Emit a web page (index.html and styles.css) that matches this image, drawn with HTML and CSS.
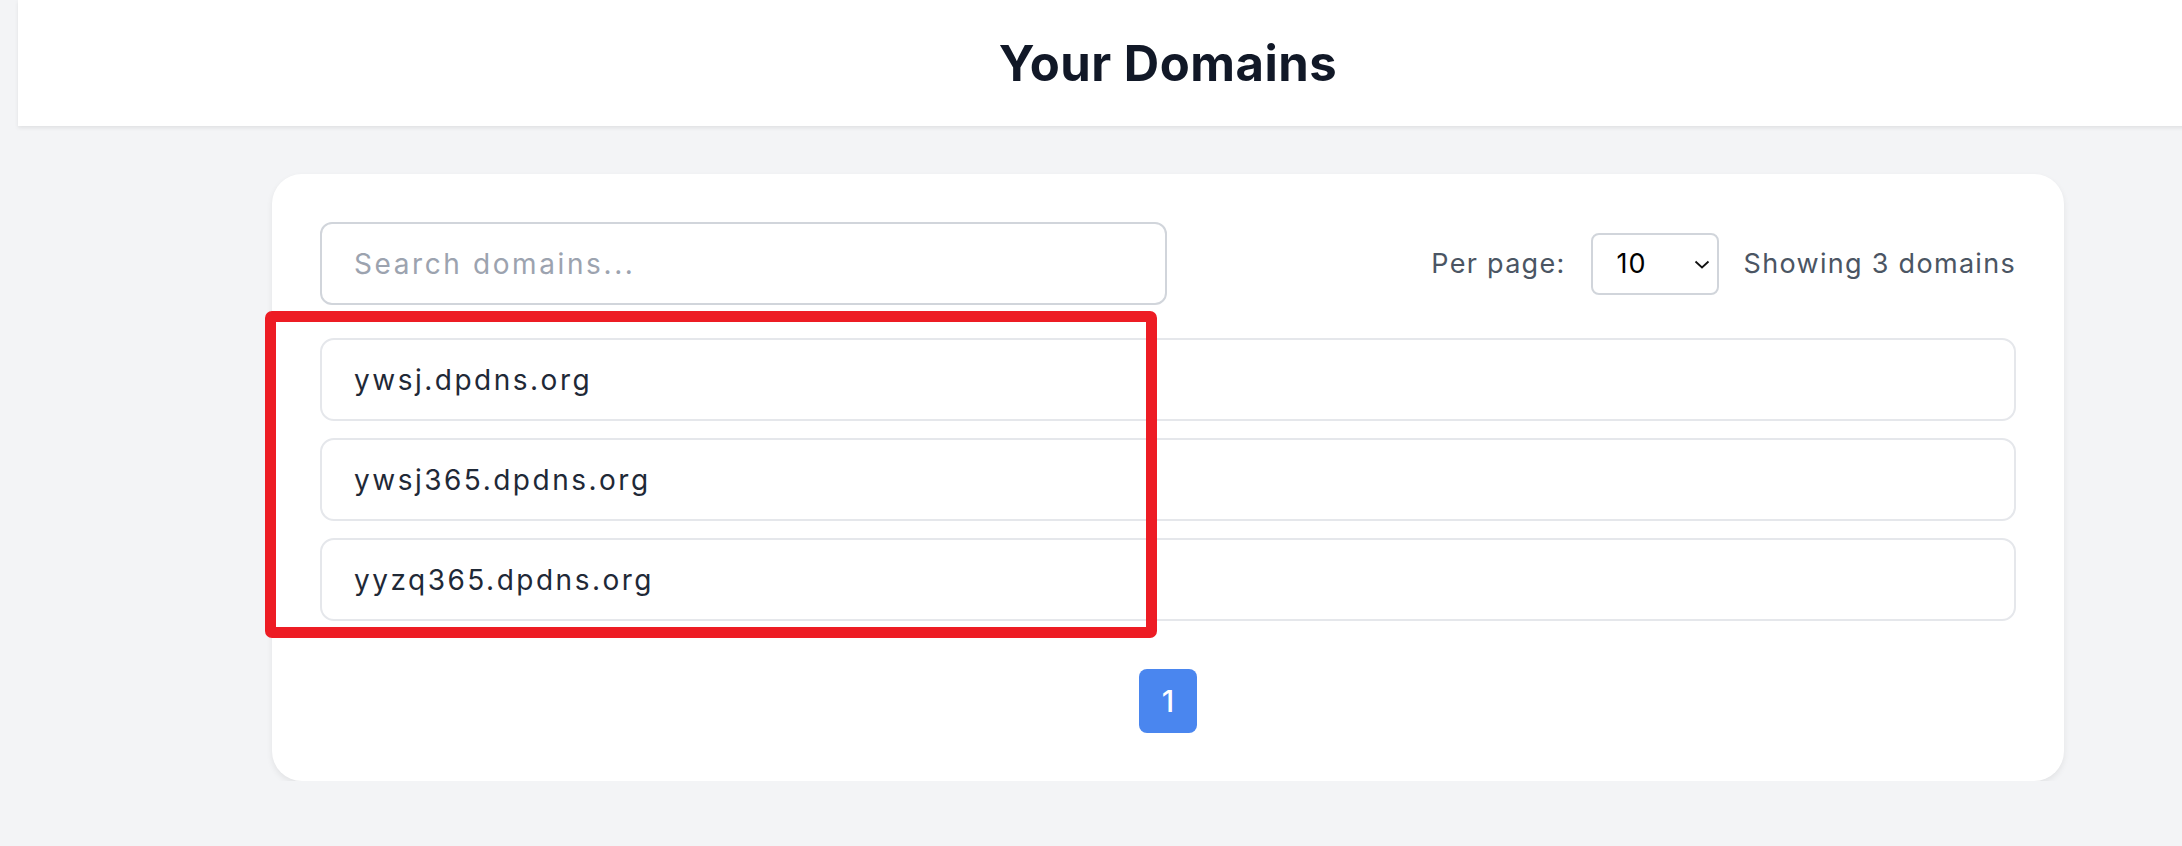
FILE: index.html
```html
<!DOCTYPE html>
<html lang="en">
<head>
  <meta charset="UTF-8">
  <meta name="viewport" content="width=device-width, initial-scale=1.0">
  <title>Your Domains</title>
  <link rel="stylesheet" href="styles.css">
</head>
<body>
  <div class="page">
    <header class="topbar">
      <h1>Your Domains</h1>
    </header>

    <main class="card">
      <div class="toolbar">
        <input class="search" type="text" placeholder="Search domains...">
        <div class="controls">
          <label for="perPage">Per page:</label>
          <div class="select-wrap">
            <select id="perPage">
              <option>10</option>
              <option>20</option>
              <option>50</option>
            </select>
            <svg class="chevron" width="16" height="9" viewBox="0 0 16 9">
              <path d="M1.5 1.5 L8 7.5 L14.5 1.5" fill="none" stroke="#111" stroke-width="1.8"/>
            </svg>
          </div>
          <span class="count">Showing 3 domains</span>
        </div>
      </div>

      <div class="domain-list">
        <div class="domain">ywsj.dpdns.org</div>
        <div class="domain">ywsj365.dpdns.org</div>
        <div class="domain">yyzq365.dpdns.org</div>
        <div class="highlight"></div>
      </div>

      <div class="pagination">
        <button class="page-btn active">1</button>
      </div>
    </main>
  </div>
</body>
</html>
```

FILE: styles.css
```css
body {
  margin: 0;
  background-color: #f3f4f6;
  font-family: "Inter", "Noto Sans", sans-serif;
  overflow-x: hidden;
}
.page {
  width: 2300px;
  margin-left: 18px;
}
.topbar {
  height: 126px;
  background: #fff;
  box-shadow: 0 2px 4px rgba(0,0,0,0.08);
  display: flex;
  align-items: center;
  justify-content: center;
}
.topbar h1 {
  margin: 0;
  font-size: 49px;
  font-weight: 700;
  color: #111827;
  letter-spacing: 0.5px;
}
.card {
  position: relative;
  width: 1792px;
  box-sizing: border-box;
  margin: 48px auto 0;
  padding: 48px;
  background: #fff;
  border-radius: 30px;
  box-shadow: 0 3px 6px rgba(0,0,0,0.07);
}
.toolbar {
  display: flex;
  align-items: center;
  justify-content: space-between;
  margin-bottom: 33px;
}
.search {
  width: 847px;
  height: 83px;
  box-sizing: border-box;
  padding: 0 32px;
  border: 2px solid #d1d5db;
  border-radius: 12px;
  font-family: inherit;
  font-size: 28px;
  letter-spacing: 2.6px;
  color: #1f2937;
  outline: none;
}
.search::placeholder {
  color: #9ca3af;
}
.controls {
  display: flex;
  align-items: center;
  gap: 25px;
  font-size: 27px;
  letter-spacing: 1.3px;
  color: #4b5563;
}
.select-wrap {
  position: relative;
}
.select-wrap select {
  appearance: none;
  width: 128px;
  height: 62px;
  box-sizing: border-box;
  padding: 0 0 0 24px;
  border: 2px solid #d1d5db;
  border-radius: 8px;
  background: #fff;
  font-family: inherit;
  font-size: 27px;
  letter-spacing: 1px;
  color: #000;
}
.chevron {
  position: absolute;
  right: 9px;
  top: 27px;
  pointer-events: none;
}
.domain-list {
  position: relative;
  display: flex;
  flex-direction: column;
  gap: 17px;
}
.domain {
  height: 83px;
  box-sizing: border-box;
  padding: 0 32px;
  border: 2px solid #e5e7eb;
  border-radius: 14px;
  display: flex;
  align-items: center;
  font-size: 28px;
  letter-spacing: 2.5px;
  color: #1f2937;
}
/* red annotation box drawn over the first rows */
.highlight {
  position: absolute;
  left: -55px;
  top: -27px;
  width: 892px;
  height: 327px;
  box-sizing: border-box;
  border: 11px solid #ed1c24;
  border-radius: 7px;
  pointer-events: none;
}
.pagination {
  display: flex;
  justify-content: center;
  margin-top: 48px;
}
.page-btn {
  width: 58px;
  height: 64px;
  border: none;
  border-radius: 8px;
  font-family: inherit;
  font-size: 30px;
  font-weight: 500;
  color: #fff;
  background-color: #e5e7eb;
  cursor: pointer;
}
.page-btn.active {
  background-color: #4a86ef;
}
```
